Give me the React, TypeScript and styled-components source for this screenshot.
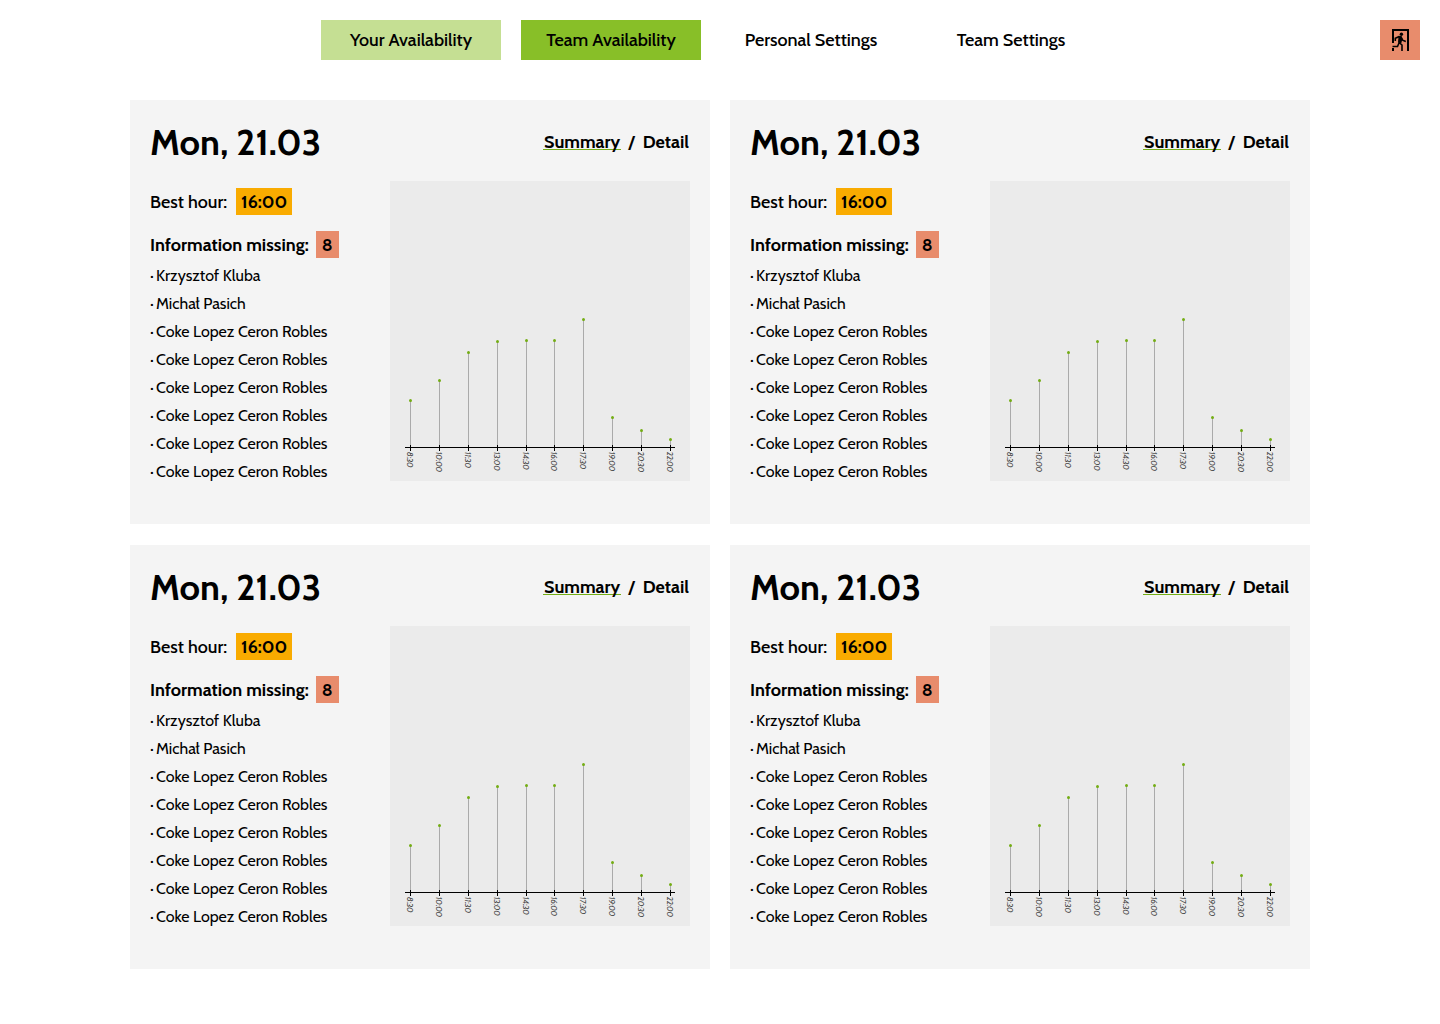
import React, { useId } from 'react';
import styled, { createGlobalStyle } from 'styled-components';

const GlobalStyle = createGlobalStyle`
  *, *::before, *::after { box-sizing: border-box; }
  body {
    margin: 0;
    background: #fff;
    color: #000;
    font-family: Cabin, Lato, "Liberation Sans", sans-serif;
    font-size: 18px;
  }
  button { font: inherit; color: inherit; border: 0; cursor: pointer; }
  h2, h3, p, ul { margin: 0; padding: 0; }
`;

const Header = styled.header`
  display: flex;
  align-items: center;
  padding: 20px 20px 20px 42px;
`;

const Nav = styled.nav`
  flex: 1;
  display: flex;
  justify-content: center;
  gap: 20px;
`;

const Tab = styled.button<{ $fill?: string }>`
  width: 180px;
  height: 40px;
  padding: 0;
  background: ${({ $fill }) => $fill ?? 'transparent'};
  font-weight: 500;
`;

const ExitButton = styled.button`
  display: flex;
  align-items: center;
  justify-content: center;
  width: 40px;
  height: 40px;
  padding: 0;
  background: #e88c6c;
`;

const Board = styled.main`
  display: grid;
  grid-template-columns: repeat(2, minmax(0, 1fr));
  gap: 21px 20px;
  max-width: 1220px;
  margin: 0 auto;
  padding: 20px;
`;

const Card = styled.section`
  padding: 20px 20px 38px;
  background: #f4f4f4;
`;

const CardHead = styled.div`
  display: flex;
  align-items: center;
  justify-content: space-between;
  height: 44px;
  margin-bottom: 17px;
`;

const DayTitle = styled.h2`
  font-size: 36px;
  line-height: 44px;
  font-weight: 700;
`;

const ViewSwitch = styled.div`
  display: flex;
  align-items: center;
  gap: 7px;
  font-weight: 700;
`;

const ViewButton = styled.button<{ $active?: boolean }>`
  height: 22px;
  padding: 0 1px;
  line-height: 22px;
  background: ${({ $active }) =>
    $active ? 'linear-gradient(#74ad14, #74ad14) 0 18px / 100% 1px no-repeat' : 'none'};
`;

const CardBody = styled.div`
  display: flex;
  justify-content: space-between;
`;

const Details = styled.div`
  padding-top: 7px;
`;

const Fact = styled.p<{ $strong?: boolean }>`
  display: flex;
  align-items: center;
  gap: ${({ $strong }) => ($strong ? '7px' : '9px')};
  height: 27px;
  margin-bottom: ${({ $strong }) => ($strong ? '4px' : '16px')};
  font-weight: ${({ $strong }) => ($strong ? 700 : 500)};
`;

const Badge = styled.span<{ $fill: string; $wide?: boolean }>`
  min-width: ${({ $wide }) => ($wide ? '56px' : '23px')};
  height: 27px;
  background: ${({ $fill }) => $fill};
  line-height: 28px;
  font-weight: 700;
  text-align: center;
`;

const People = styled.ul`
  list-style: none;
  font-size: 16px;
  line-height: 28px;
`;

const Person = styled.li`
  display: flex;
  &::before { content: "·"; width: 6px; }
`;

const Chart = styled.svg`
  display: block;
  flex: none;
  width: 300px;
  height: 300px;
  background: #ebebeb;
`;

const TickLabel = styled.text`
  fill: #444;
  font-size: 8px;
  font-style: italic;
`;

const hours = [
  { x: 20, y: 219, label: '8:30' },
  { x: 49, y: 199, label: '10:00' },
  { x: 78, y: 171, label: '11:30' },
  { x: 107, y: 160, label: '13:00' },
  { x: 136, y: 159, label: '14:30' },
  { x: 164, y: 159, label: '16:00' },
  { x: 193, y: 138, label: '17:30' },
  { x: 222, y: 236, label: '19:00' },
  { x: 251, y: 249, label: '20:30' },
  { x: 280, y: 258, label: '22:00' },
];

const people = ['Krzysztof Kluba', 'Michał Pasich', ...Array(6).fill('Coke Lopez Ceron Robles')];

function AvailabilityChart() {
  return (
    <Chart viewBox="0 0 300 300" role="img" aria-label="Availability by hour">
      {hours.map(({ x, y, label }) => (
        <g key={label}>
          <rect x={x} y={y} width="1" height={266 - y} fill="#aaa" />
          <circle cx={x + 0.5} cy={y + 0.5} r="1.5" fill="#74ad14" />
          <rect x={x} y="264" width="1" height="6" />
          <TickLabel transform={`translate(${x - 3} 271) rotate(90)`}>{label}</TickLabel>
        </g>
      ))}
      <rect x="15" y="266" width="270" height="1" />
    </Chart>
  );
}

function ExitIcon() {
  return (
    <svg width="18" height="22" viewBox="-1 0 18 22" aria-hidden="true">
      <path d="M0 0h17v22h-2V2H2v12H0zM0 19h2v3H0z" />
      <circle cx="9.400" cy="5.300" r="1.7" />
      <path
        d="M3.300 12V9.300L7 7.700l2 .3 1.600 3.200 3.200 1.300M7.800 9L7 13.500l3 2.500v6M7 14l-1.500 3.500H.5"
        fill="none"
        stroke="#000"
        strokeWidth="1.6"
      />
      <path d="M6.500 7.200h3l1 2.500-1.300 4.800-3-1.300z" />
    </svg>
  );
}

function DayCard() {
  const id = useId();
  return (
    <Card aria-labelledby={id}>
      <CardHead>
        <DayTitle id={id}>Mon, 21.03</DayTitle>
        <ViewSwitch>
          <ViewButton $active>Summary</ViewButton>
          <span>/</span>
          <ViewButton>Detail</ViewButton>
        </ViewSwitch>
      </CardHead>
      <CardBody>
        <Details>
          <Fact>
            Best hour: <Badge $fill="#f9ab00" $wide>16:00</Badge>
          </Fact>
          <Fact $strong>
            Information missing: <Badge $fill="#e88c6c">8</Badge>
          </Fact>
          <People>
            {people.map((name, i) => (
              <Person key={i}>{name}</Person>
            ))}
          </People>
        </Details>
        <AvailabilityChart />
      </CardBody>
    </Card>
  );
}

export default function App() {
  return (
    <>
      <GlobalStyle />
      <Header>
        <Nav>
          <Tab $fill="#c5df93">Your Availability</Tab>
          <Tab $fill="#88bf28">Team Availability</Tab>
          <Tab>Personal Settings</Tab>
          <Tab>Team Settings</Tab>
        </Nav>
        <ExitButton aria-label="Log out">
          <ExitIcon />
        </ExitButton>
      </Header>
      <Board>
        <DayCard />
        <DayCard />
        <DayCard />
        <DayCard />
      </Board>
    </>
  );
}
